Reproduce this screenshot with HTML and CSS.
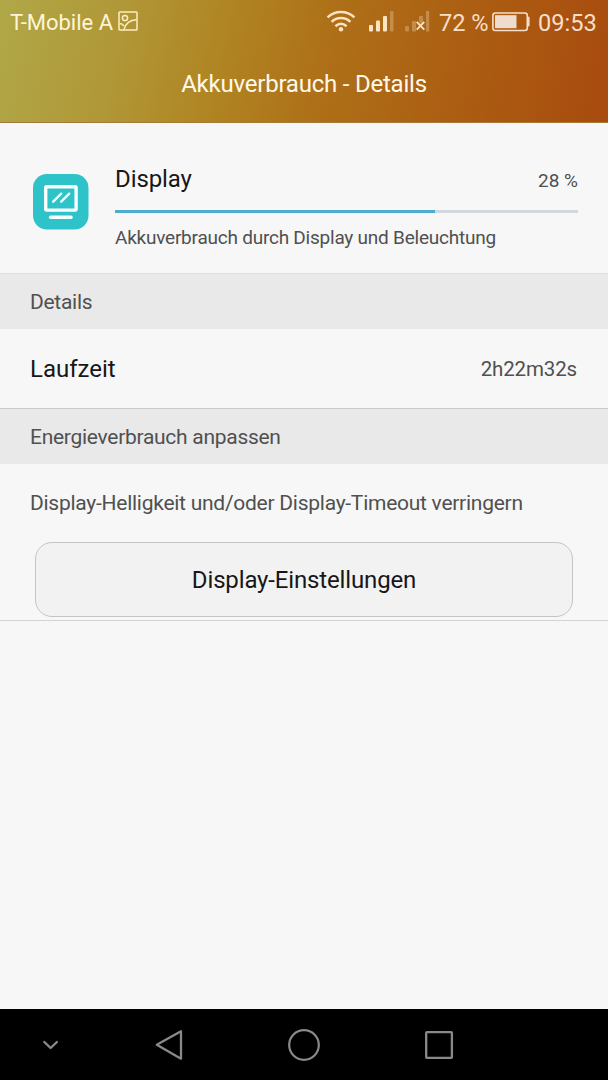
FILE: index.html
```html
<!DOCTYPE html>
<html lang="de">
<head>
<meta charset="utf-8">
<title>Akkuverbrauch - Details</title>
<link rel="stylesheet" href="styles.css">
</head>
<body>
<header class="header">
  <div class="status">
    <span class="carrier">T-Mobile A</span>
    <svg class="picture" width="20" height="20" viewBox="0 0 20 20" fill="none" stroke="#fdedc0" stroke-width="1.5"><rect x="1" y="1" width="18" height="18" rx=".8"/><circle cx="7" cy="7" r="2.6"/><path d="M6 18.5C7.5 13 12 9 18.5 8.8M1.5 12.5C3.5 12.5 5 13.5 6 15"/></svg>
    <svg class="signals" width="104" height="24" viewBox="326 10 104 24">
      <g fill="none" stroke="#fbe4c4" stroke-width="2.5"><path d="M327.6 17.3C335 10.1 347 10.1 354.4 17.3M331.6 21.8C337 16.8 345 16.8 350.4 21.8M335.4 26.2C339 23 343 23 346.6 26.2"/></g>
      <circle cx="341" cy="29.3" r="2.2" fill="#fbe4c4"/>
      <g fill="#fbe4c4"><rect x="369" y="25" width="4" height="6.5" rx="1"/><rect x="376" y="20.5" width="4" height="11" rx="1"/><rect x="383" y="16" width="4" height="15.5" rx="1"/><rect x="390" y="11" width="3.5" height="20.5" rx="1" opacity=".3"/></g>
      <g fill="#fbe4c4" opacity=".3"><rect x="405" y="26" width="4" height="5.5" rx="1"/><rect x="412" y="21" width="4" height="10.5" rx="1"/><path d="M419 16h4v6l-2 2-2-2zM426 11h3.2v20.5h-3.2z"/></g>
      <path d="M416.7 21.8l7.6 7.8M424.3 21.8l-7.6 7.8" stroke="#fbe4c4" stroke-width="1.8"/>
    </svg>
    <span class="percent">72 %</span>
    <svg class="battery" width="38" height="20" viewBox="0 0 38 20"><rect x=".9" y="1" width="34.4" height="17.5" rx="2.5" fill="none" stroke="#f8dfca" stroke-width="1.6"/><rect x="3" y="3.2" width="21.5" height="13" fill="#f0dccd"/><path d="M35.5 5.5h1.3v8h-1.3" fill="none" stroke="#f8dfca" stroke-width="1.5"/></svg>
    <span class="clock">09:53</span>
  </div>
  <h1 class="title">Akkuverbrauch - Details</h1>
</header>
<main>
  <section class="usage">
    <svg class="app-icon" width="56" height="56" viewBox="0 0 56 56"><rect width="55.5" height="55.5" rx="14" fill="#2ec3c8"/><g fill="none" stroke="#f7ffff" stroke-width="3.4" stroke-linecap="round" stroke-linejoin="round"><rect x="12.7" y="12.7" width="30.4" height="23.4" rx="1"/><path d="M17.6 43.2h20.4"/><path stroke-width="2.4" d="M20.2 27.7l8-8M28.2 27.7l8-8"/></g></svg>
    <div class="usage-body">
      <div class="usage-head"><span class="primary name">Display</span><span class="share">28 %</span></div>
      <div class="bar"><div class="fill"></div></div>
      <p class="summary">Akkuverbrauch durch Display und Beleuchtung</p>
    </div>
  </section>
  <h2 class="section">Details</h2>
  <div class="row"><span class="primary runtime">Laufzeit</span><span class="value">2h22m32s</span></div>
  <h2 class="section adjust">Energieverbrauch anpassen</h2>
  <section class="advice">
    <p class="hint">Display-Helligkeit und/oder Display-Timeout verringern</p>
    <button class="button">Display-Einstellungen</button>
  </section>
</main>
<nav class="nav">
  <svg width="608" height="71" viewBox="0 0 608 71" fill="none" stroke="#898989" stroke-linecap="round" stroke-linejoin="round"><path stroke-width="2.4" d="M44.3 33l6.3 6 6.3-6"/><path stroke-width="2.3" d="M156.8 35.8L181 22.2V49.7Z"/><circle stroke-width="2.2" cx="304" cy="36" r="14.8"/><rect stroke-width="2.3" x="426.2" y="23.2" width="25.7" height="25.7" rx=".6"/></svg>
</nav>
</body>
</html>
```
FILE: styles.css
```css
* { box-sizing: border-box; }
body {
  margin: 0;
  height: 1080px;
  display: flex;
  flex-direction: column;
  background: #f7f7f7;
  color: #505050;
  font-family: Roboto, "Liberation Sans", sans-serif;
  white-space: nowrap;
  overflow: hidden;
}
h1, h2, p { margin: 0; font-weight: 400; }
svg { display: block; flex: none; }
.header {
  height: 123px;
  flex: none;
  background: linear-gradient(102deg, #b0a848 0%, #b09737 20%, #b08422 37%, #ae7018 53%, #ac5e12 75%, #a84b0f 100%);
  border-bottom: 1px solid #a67b37;
}
.status {
  height: 44px;
  display: flex;
  align-items: center;
  padding: 1px 0 0 10px;
  font-size: 23.6px;
  line-height: 44px;
  color: #f8dfca;
}
.carrier { width: 108px; font-size: 22px; color: #fff5d6; }
.picture { margin-top: -3px; }
.signals { margin-left: 188px; margin-top: -1px; }
.percent { width: 53px; margin-left: 9px; }
.battery { margin-top: -1px; }
.clock { margin-left: 8px; }
.title {
  text-align: center;
  font-size: 24px;
  line-height: 80px;
  letter-spacing: -.22px;
  color: #fff9e9;
}
.usage {
  height: 150px;
  display: flex;
  padding: 0 30px 0 33px;
}
.app-icon { margin: 51px 26px 0 0; }
.usage-body { flex: 1; padding-top: 40px; }
.usage-head { display: flex; justify-content: space-between; height: 47px; line-height: 32px; }
.primary { font-size: 24px; color: #171717; }
.name { letter-spacing: -.1px; }
.share { font-size: 19px; line-height: 36px; }
.bar { height: 3px; background: #cfd8dd; }
.fill { width: 320px; height: 3px; background: #4eacd0; }
.summary { font-size: 19px; line-height: 24px; margin-top: 13px; letter-spacing: -.23px; }
.section {
  height: 56px;
  padding-left: 30px;
  border-top: 1px solid #dfdfdf;
  background: #e9e9e9;
  font-size: 21px;
  line-height: 57px;
  letter-spacing: -.28px;
}
.row {
  height: 79px;
  display: flex;
  align-items: center;
  justify-content: space-between;
  padding: 1px 31px 0 30px;
}
.value { font-size: 20.5px; letter-spacing: -.15px; }
.adjust { border-color: #cbcbcb; }
.advice {
  height: 157px;
  padding: 20px 35px 0;
  border-bottom: 1px solid #d4d4d4;
}
.hint { margin-left: -5px; height: 58px; font-size: 21px; line-height: 38px; letter-spacing: -.26px; }
.button {
  display: block;
  width: 538px;
  height: 75px;
  border: 1px solid #c4c4c4;
  border-radius: 17px;
  background: #f2f2f2;
  color: #171717;
  font: 24px Roboto, "Liberation Sans", sans-serif;
  letter-spacing: -.15px;
}
.nav { height: 71px; margin-top: auto; background: #000; }
```
